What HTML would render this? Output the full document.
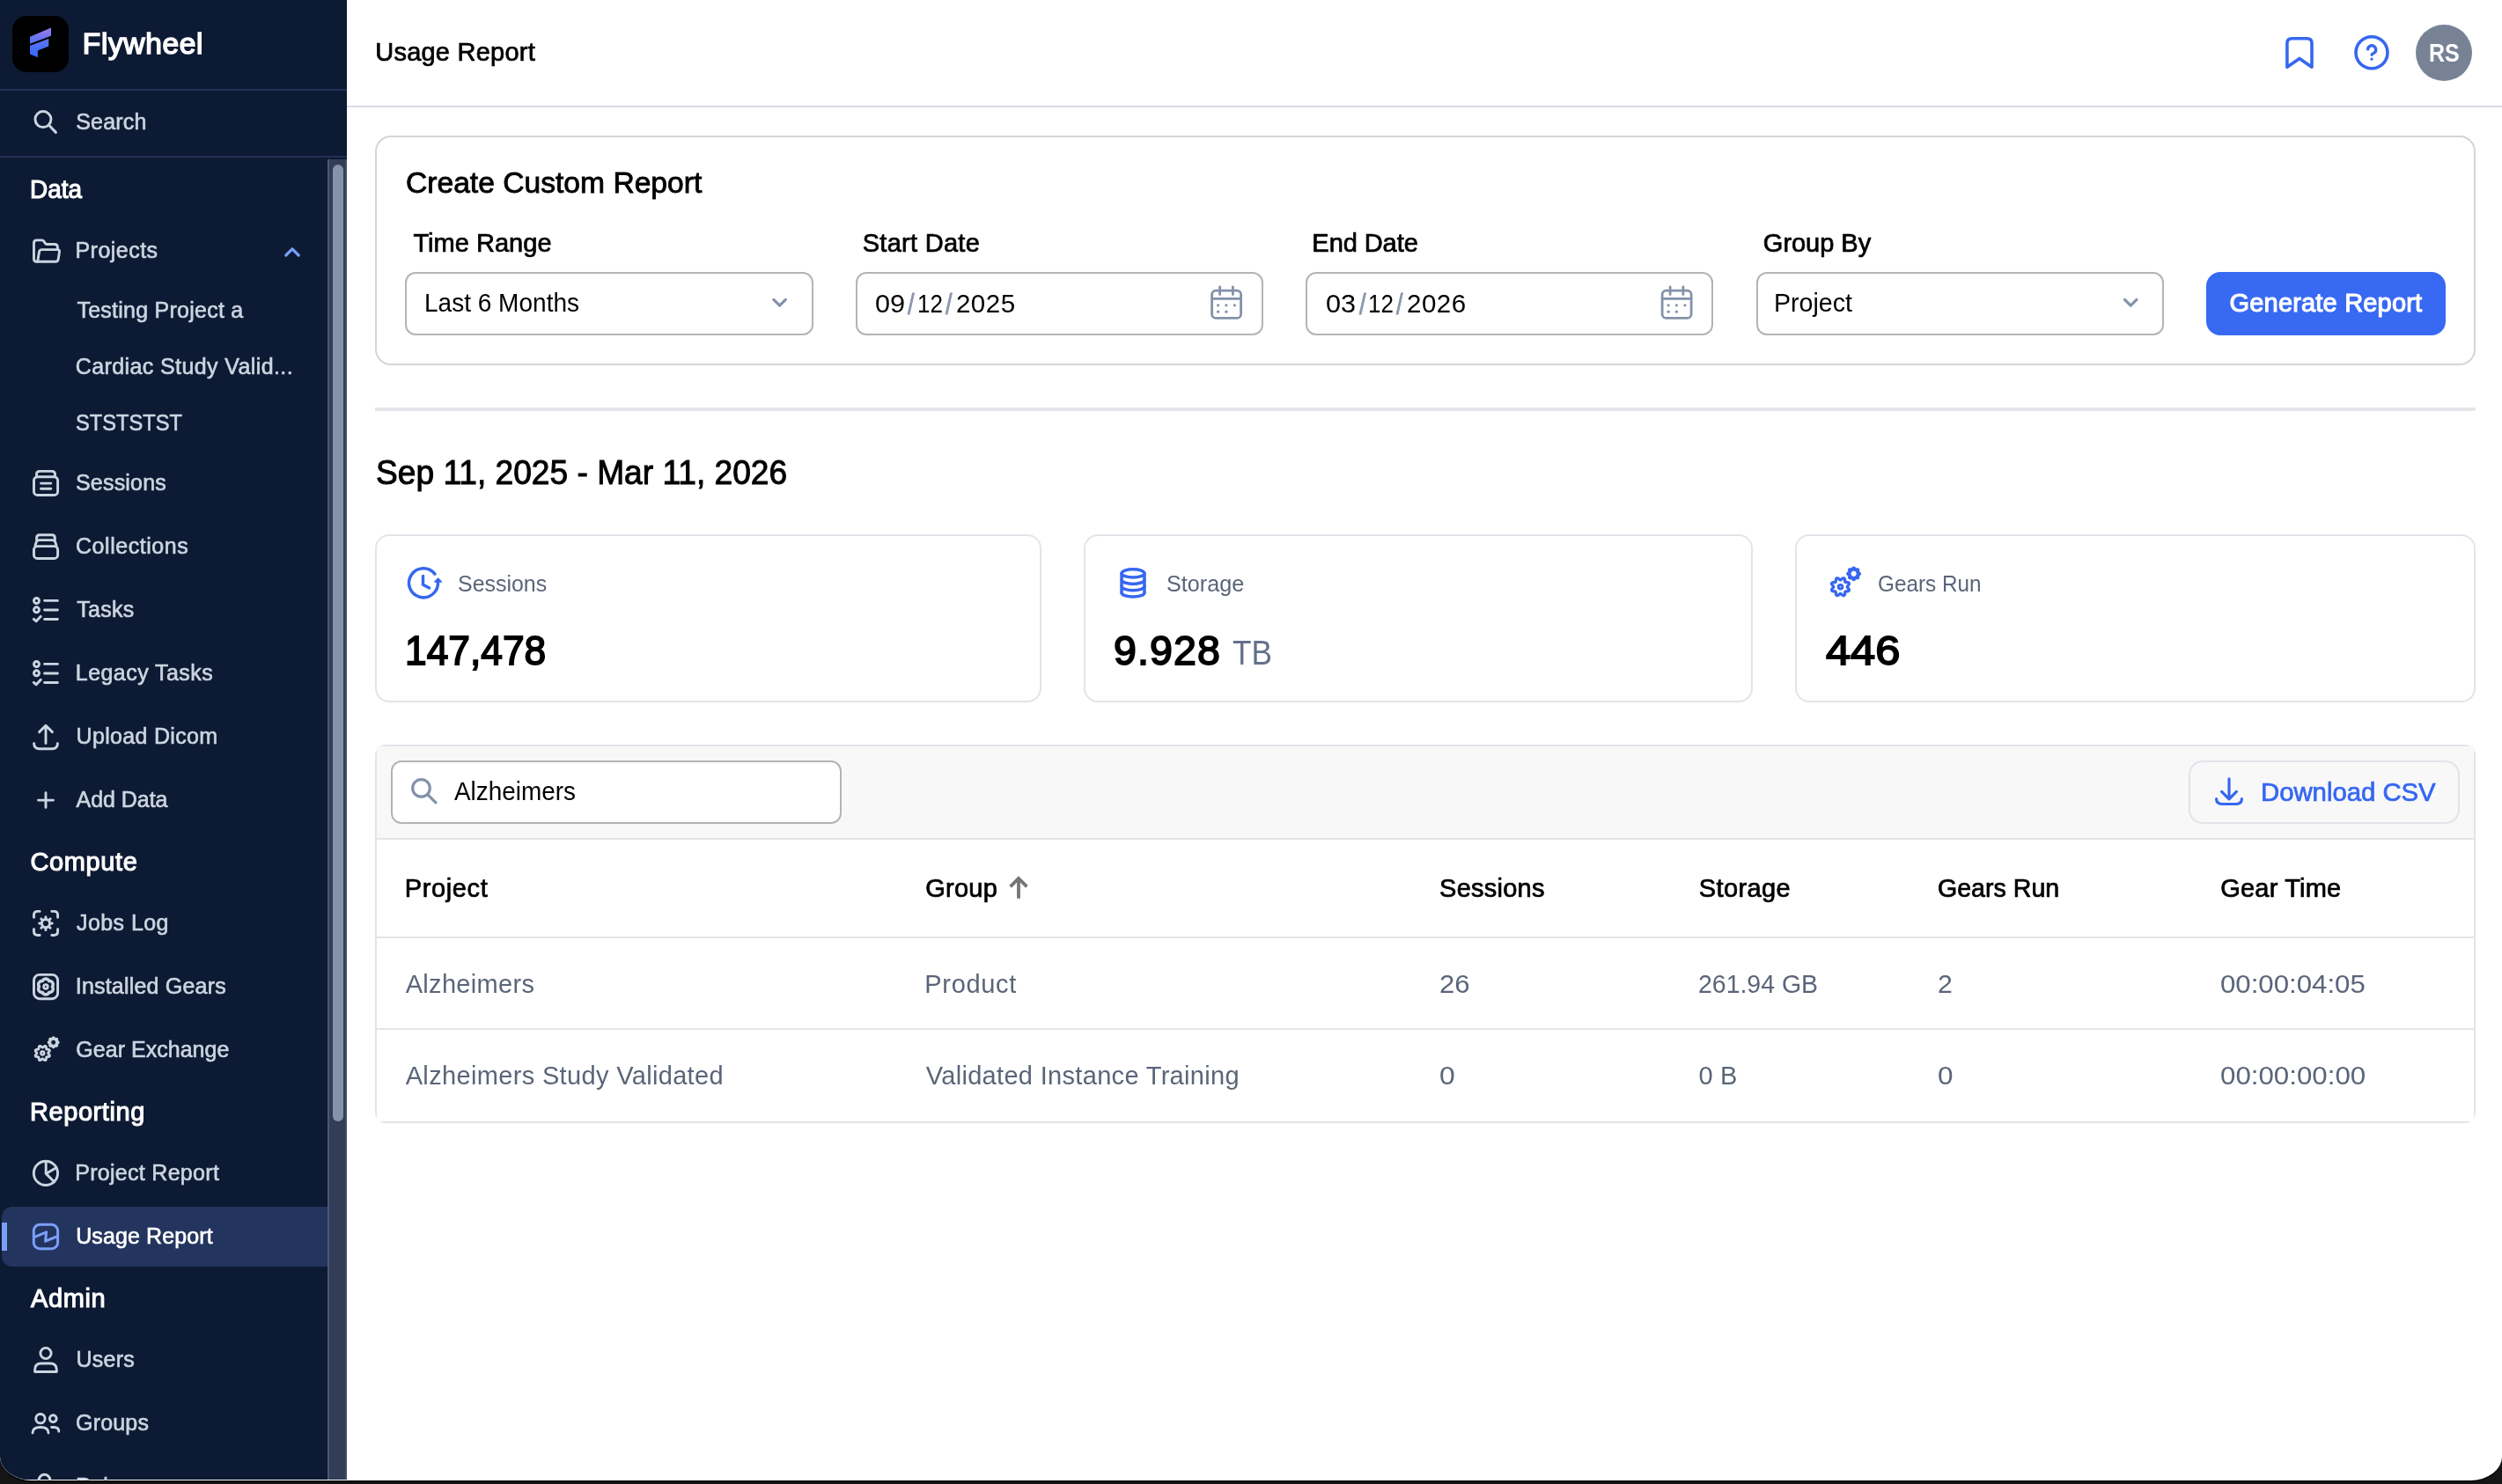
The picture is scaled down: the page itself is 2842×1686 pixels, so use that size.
<!DOCTYPE html>
<html><head><meta charset="utf-8"><title>Usage Report</title>
<style>
html,body{margin:0;padding:0}
body{width:2842px;height:1686px;overflow:hidden;background:#151515;font-family:"Liberation Sans",sans-serif;position:relative}
.win{position:absolute;left:0;top:0;width:2842px;height:1682px;background:#fff;border-radius:0 0 36px 36px / 0 0 27px 27px;overflow:hidden}
.winsh{left:0;top:0;width:2842px;height:1682px;border-radius:0 0 36px 36px / 0 0 27px 27px;box-shadow:0 1.4px 0 #000}
.winedge{left:0;top:1600px;width:394px;height:82px;border-radius:0 0 0 36px / 0 0 0 27px;box-shadow:inset 0 -1px 0 rgba(255,255,255,.22);pointer-events:none}
.a{position:absolute;box-sizing:border-box}
.t{position:absolute;white-space:pre;line-height:1;font-family:"Liberation Sans",sans-serif;-webkit-font-smoothing:antialiased}
.side{left:0;top:0;width:394px;height:1681px;background:#0d1a33}
.sline{left:0;width:394px;height:2px;background:#223056}
.track{left:372px;top:181px;width:22px;height:1500px;background:#323d58;border-left:2px solid #4e586f;border-right:2px solid #434e67}
.thumb{left:378px;top:187px;width:12px;height:1087px;border-radius:6px;background:#8593aa}
.sel{left:2px;top:1371px;width:372px;height:68px;background:#23355e;border-radius:12px 0 0 12px}
.ind{left:2px;top:1389px;width:6px;height:32px;background:#7b9ef8}
.hline{left:394px;top:120px;width:2448px;height:2px;background:#d6dbe4}
.card{border:2px solid #d5d5d6;border-radius:18px;background:#fff}
.inp{border:2px solid #b4b4b5;border-radius:12px;background:#fff;height:72px;top:309px;width:463px}
.btn{left:2506px;top:309px;width:272px;height:72px;border-radius:16px;background:#3869f2}
.hr{left:426px;top:463px;width:2386px;height:4px;background:#e4e6ea}
.stat{border:2px solid #e3e4ea;border-radius:16px;background:#fff;top:607px;height:191px}
.tbl{left:426px;top:846px;width:2386px;height:430px;border:2px solid #e3e4ea;border-radius:12px;background:transparent}
.tbar{left:0;top:0;width:100%;height:104px;background:#f8f8f9}
.tbody{left:0;top:106px;width:100%;height:320px;background:#fff}
.tl{left:0;width:100%;height:2px;background:#e4e4ea}
svg{position:absolute;overflow:visible}
.ic{fill:none;stroke:#cbd5e1;stroke-width:2.6;stroke-linecap:round;stroke-linejoin:round}

</style></head>
<body>
<div class="a winsh"></div>
<div class="win">
<div class="a side"></div>
<div class="a sline" style="top:101px"></div>
<div class="a sline" style="top:177px"></div>
<div class="a sel"></div>
<div class="a ind"></div>
<div class="a track"></div>
<div class="a thumb"></div>
<!-- logo -->
<div class="a" style="left:14px;top:18px;width:64px;height:64px;border-radius:16px;background:#000"></div>
<svg style="left:14px;top:18px" width="64" height="64" viewBox="0 0 64 64">
<defs><linearGradient id="lg" x1="0" y1="0" x2="0" y2="1"><stop offset="0" stop-color="#a07be6"/><stop offset="0.45" stop-color="#5b74f5"/><stop offset="1" stop-color="#2f66ff"/></linearGradient></defs>
<path d="M20 23.7 L44 13.5 L44 22.8 L20 31.8 Z M20 34.1 L41.3 26 L41.3 34.6 L28.9 39.4 L28.9 47.2 L20 43.5 Z" fill="url(#lg)"/>
</svg>
<!-- header line -->
<div class="a hline"></div>
<!-- custom report card -->
<div class="a card" style="left:426px;top:154px;width:2386px;height:261px"></div>
<div class="a inp" style="left:460px;width:464px"></div>
<div class="a inp" style="left:972px"></div>
<div class="a inp" style="left:1483px"></div>
<div class="a inp" style="left:1995px"></div>
<div class="a btn"></div>
<div class="a hr"></div>
<!-- stat cards -->
<div class="a stat" style="left:426px;width:757px"></div>
<div class="a stat" style="left:1231px;width:760px"></div>
<div class="a stat" style="left:2039px;width:773px"></div>
<!-- table -->
<div class="a tbl">
 <div class="a tbar"></div>
 <div class="a tbody"></div>
 <div class="a tl" style="top:104px"></div>
 <div class="a tl" style="top:216px"></div>
 <div class="a tl" style="top:320px"></div>
</div>
<div class="a" style="left:444px;top:864px;width:512px;height:72px;border:2px solid #b4b4b5;border-radius:12px;background:#fff"></div>
<div class="a" style="left:2486px;top:864px;width:308px;height:72px;border:2px solid #e2e3e9;border-radius:16px"></div>
<!-- avatar -->
<div class="a" style="left:2744px;top:28px;width:64px;height:64px;border-radius:32px;background:#778395"></div>
<svg class="a" style="left:0;top:0" width="2842" height="1681" viewBox="0 0 2842 1681">
<circle cx="48.95" cy="135.6" r="9.0" fill="none" stroke="#cbd5e1" stroke-width="3.0"/>
<path d="M55.6 142.3 L63.4 150.4" fill="none" stroke="#cbd5e1" stroke-width="3.0" stroke-linecap="round" stroke-linejoin="round" />
<path d="M42.7 297.3 H41.5 Q38.5 297.3 38.5 294.3 V276 Q38.5 272.9 41.6 272.9 H47.6 Q49.2 272.9 50 274.2 L51.2 276.3 Q51.9 277.5 53.4 277.5 H62 Q65.4 277.5 65.4 281 V283.6" fill="none" stroke="#cbd5e1" stroke-width="2.9" stroke-linecap="round" stroke-linejoin="round" />
<path d="M42.7 297.3 L44.5 286.2 Q45 283.6 47.6 283.6 H65.2 Q67.9 283.6 67.5 286.2 L66.2 294.5 Q65.7 297.3 63 297.3 Z" fill="none" stroke="#cbd5e1" stroke-width="2.9" stroke-linecap="round" stroke-linejoin="round" />
<path d="M324.8 290 L332 282.8 L339.2 290" fill="none" stroke="#7b9ef8" stroke-width="3.2" stroke-linecap="round" stroke-linejoin="round" />
<rect x="38.5" y="541.8" width="27.1" height="20.7" rx="4" fill="none" stroke="#cbd5e1" stroke-width="2.9"/>
<path d="M41.5 541.8 V539 Q41.5 535.4 45.1 535.4 H58.9 Q62.5 535.4 62.5 539 V541.8" fill="none" stroke="#cbd5e1" stroke-width="2.9" stroke-linecap="round" stroke-linejoin="round" />
<path d="M46.5 549.1 H57.8 M46.5 555.2 H57.8" fill="none" stroke="#cbd5e1" stroke-width="2.9" stroke-linecap="round" stroke-linejoin="round" />
<rect x="38.5" y="620.6" width="27.1" height="13.9" rx="4" fill="none" stroke="#cbd5e1" stroke-width="2.9"/>
<path d="M40 620 L41 616.4 Q41.8 613.6 44.6 613.6 H59.4 Q62.2 613.6 63 616.4 L64 620" fill="none" stroke="#cbd5e1" stroke-width="2.9" stroke-linecap="round" stroke-linejoin="round" />
<path d="M41.6 613.4 V611.2 Q41.6 607.7 45.1 607.7 H58.9 Q62.4 607.7 62.4 611.2 V613.4" fill="none" stroke="#cbd5e1" stroke-width="2.9" stroke-linecap="round" stroke-linejoin="round" />
<circle cx="41.5" cy="682.5" r="3.0" fill="none" stroke="#cbd5e1" stroke-width="2.9"/>
<circle cx="41.5" cy="692.8" r="3.0" fill="none" stroke="#cbd5e1" stroke-width="2.9"/>
<path d="M38.3 703.4 L41.2 705.8 L46.3 700.3" fill="none" stroke="#cbd5e1" stroke-width="2.9" stroke-linecap="round" stroke-linejoin="round" />
<path d="M50.6 682.4 H65.4 M50.6 693 H65.4 M50.6 703.5 H65.4" fill="none" stroke="#cbd5e1" stroke-width="2.9" stroke-linecap="round" stroke-linejoin="round" />
<circle cx="41.5" cy="754.5" r="3.0" fill="none" stroke="#cbd5e1" stroke-width="2.9"/>
<circle cx="41.5" cy="764.8" r="3.0" fill="none" stroke="#cbd5e1" stroke-width="2.9"/>
<path d="M38.3 775.4 L41.2 777.8 L46.3 772.3" fill="none" stroke="#cbd5e1" stroke-width="2.9" stroke-linecap="round" stroke-linejoin="round" />
<path d="M50.6 754.4 H65.4 M50.6 765 H65.4 M50.6 775.5 H65.4" fill="none" stroke="#cbd5e1" stroke-width="2.9" stroke-linecap="round" stroke-linejoin="round" />
<path d="M52 844.5 V824.4 M44.6 831.6 L52 824.2 L59.4 831.6" fill="none" stroke="#cbd5e1" stroke-width="2.9" stroke-linecap="round" stroke-linejoin="round" />
<path d="M38.6 844.6 Q38.6 850.8 45 850.8 H59 Q65.4 850.8 65.4 844.6" fill="none" stroke="#cbd5e1" stroke-width="2.9" stroke-linecap="round" stroke-linejoin="round" />
<path d="M43.5 909.1 H60.5 M52 900.7 V917.4" fill="none" stroke="#cbd5e1" stroke-width="2.9" stroke-linecap="round" stroke-linejoin="round" />
<path d="M38.5 1042.3 V1039.6 Q38.5 1035.4 42.7 1035.4 H45.2 M58.8 1035.4 H61.4 Q65.6 1035.4 65.6 1039.6 V1042.3 M65.6 1055.6 V1058.3 Q65.6 1062.5 61.4 1062.5 H58.8 M45.2 1062.5 H42.7 Q38.5 1062.5 38.5 1058.3 V1055.6" fill="none" stroke="#cbd5e1" stroke-width="2.9" stroke-linecap="round" stroke-linejoin="round" />
<circle cx="51.95" cy="1049.1" r="4.6" fill="none" stroke="#cbd5e1" stroke-width="3.0"/>
<path d="M58.15 1049.10 L59.25 1049.10 M56.33 1053.48 L57.11 1054.26 M51.95 1055.30 L51.95 1056.40 M47.57 1053.48 L46.79 1054.26 M45.75 1049.10 L44.65 1049.10 M47.57 1044.72 L46.79 1043.94 M51.95 1042.90 L51.95 1041.80 M56.33 1044.72 L57.11 1043.94" fill="none" stroke="#cbd5e1" stroke-width="3.0" stroke-linecap="round" stroke-linejoin="round" />
<rect x="38.5" y="1107.4" width="27.1" height="27.3" rx="6.5" fill="none" stroke="#cbd5e1" stroke-width="2.9"/>
<path d="M48.22 1114.53 L48.68 1113.71 L49.33 1113.01 L50.12 1112.49 L51.01 1112.16 L51.95 1112.05 L52.89 1112.16 L53.78 1112.49 L54.57 1113.01 L55.22 1113.71 L55.68 1114.53 L55.68 1114.53 L56.63 1114.52 L57.56 1114.74 L58.41 1115.16 L59.13 1115.76 L59.70 1116.52 L60.08 1117.40 L60.24 1118.33 L60.18 1119.28 L59.90 1120.18 L59.42 1121.00 L59.42 1121.00 L59.90 1121.82 L60.18 1122.72 L60.24 1123.67 L60.08 1124.60 L59.70 1125.48 L59.13 1126.24 L58.41 1126.84 L57.56 1127.26 L56.63 1127.48 L55.68 1127.47 L55.68 1127.47 L55.22 1128.29 L54.57 1128.99 L53.78 1129.51 L52.89 1129.84 L51.95 1129.95 L51.01 1129.84 L50.12 1129.51 L49.33 1128.99 L48.68 1128.29 L48.22 1127.47 L48.22 1127.47 L47.27 1127.48 L46.34 1127.26 L45.49 1126.84 L44.77 1126.24 L44.20 1125.48 L43.82 1124.60 L43.66 1123.67 L43.72 1122.72 L44.00 1121.82 L44.48 1121.00 L44.48 1121.00 L44.00 1120.18 L43.72 1119.28 L43.66 1118.33 L43.82 1117.40 L44.20 1116.52 L44.77 1115.76 L45.49 1115.16 L46.34 1114.74 L47.27 1114.52 L48.22 1114.53 Z" fill="none" stroke="#cbd5e1" stroke-width="3.5" stroke-linecap="round" stroke-linejoin="round" />
<circle cx="51.95" cy="1121" r="2.35" fill="none" stroke="#cbd5e1" stroke-width="2.7"/>
<path d="M54.65 1196.50 L54.80 1196.93 L55.19 1197.41 L55.70 1197.97 L56.16 1198.61 L56.42 1199.26 L56.37 1199.84 L55.99 1200.29 L55.35 1200.57 L54.57 1200.69 L53.81 1200.73 L53.20 1200.80 L52.79 1200.99 L52.60 1201.40 L52.53 1202.01 L52.49 1202.77 L52.37 1203.55 L52.09 1204.19 L51.64 1204.57 L51.06 1204.62 L50.41 1204.36 L49.77 1203.90 L49.21 1203.39 L48.73 1203.00 L48.30 1202.86 L47.87 1203.00 L47.39 1203.39 L46.83 1203.90 L46.19 1204.36 L45.54 1204.62 L44.96 1204.57 L44.51 1204.19 L44.23 1203.55 L44.11 1202.77 L44.07 1202.01 L44.00 1201.40 L43.81 1200.99 L43.40 1200.80 L42.79 1200.73 L42.03 1200.69 L41.25 1200.57 L40.61 1200.29 L40.23 1199.84 L40.18 1199.26 L40.44 1198.61 L40.90 1197.97 L41.41 1197.41 L41.80 1196.93 L41.95 1196.50 L41.80 1196.07 L41.41 1195.59 L40.90 1195.03 L40.44 1194.39 L40.18 1193.74 L40.23 1193.16 L40.61 1192.71 L41.25 1192.43 L42.03 1192.31 L42.79 1192.27 L43.40 1192.20 L43.81 1192.01 L44.00 1191.60 L44.07 1190.99 L44.11 1190.23 L44.23 1189.45 L44.51 1188.81 L44.96 1188.43 L45.54 1188.38 L46.19 1188.64 L46.83 1189.10 L47.39 1189.61 L47.87 1190.00 L48.30 1190.14 L48.73 1190.00 L49.21 1189.61 L49.77 1189.10 L50.41 1188.64 L51.06 1188.38 L51.64 1188.43 L52.09 1188.81 L52.37 1189.45 L52.49 1190.23 L52.53 1190.99 L52.60 1191.60 L52.79 1192.01 L53.20 1192.20 L53.81 1192.27 L54.57 1192.31 L55.35 1192.43 L55.99 1192.71 L56.37 1193.16 L56.42 1193.74 L56.16 1194.39 L55.70 1195.03 L55.19 1195.59 L54.80 1196.07 Z" fill="none" stroke="#cbd5e1" stroke-width="2.8" stroke-linecap="round" stroke-linejoin="round" />
<circle cx="48.3" cy="1196.5" r="1.8859999999999997" fill="none" stroke="#cbd5e1" stroke-width="2.52"/>
<path d="M66.18 1184.28 L66.04 1184.63 L65.68 1184.94 L65.19 1185.18 L64.68 1185.35 L64.29 1185.51 L64.09 1185.69 L64.10 1185.97 L64.27 1186.35 L64.50 1186.83 L64.68 1187.35 L64.72 1187.82 L64.57 1188.17 L64.22 1188.32 L63.75 1188.28 L63.23 1188.10 L62.75 1187.87 L62.37 1187.70 L62.09 1187.69 L61.91 1187.89 L61.75 1188.28 L61.58 1188.79 L61.34 1189.28 L61.03 1189.64 L60.68 1189.78 L60.33 1189.64 L60.02 1189.28 L59.79 1188.79 L59.61 1188.28 L59.46 1187.89 L59.27 1187.69 L59.00 1187.70 L58.61 1187.87 L58.13 1188.10 L57.61 1188.28 L57.14 1188.32 L56.80 1188.17 L56.64 1187.82 L56.68 1187.35 L56.86 1186.83 L57.10 1186.35 L57.26 1185.97 L57.27 1185.69 L57.07 1185.51 L56.68 1185.35 L56.18 1185.18 L55.68 1184.94 L55.32 1184.63 L55.19 1184.28 L55.32 1183.93 L55.68 1183.62 L56.18 1183.39 L56.68 1183.21 L57.07 1183.06 L57.27 1182.87 L57.26 1182.60 L57.10 1182.21 L56.86 1181.73 L56.68 1181.21 L56.64 1180.74 L56.80 1180.40 L57.14 1180.24 L57.61 1180.28 L58.13 1180.46 L58.61 1180.70 L59.00 1180.86 L59.27 1180.87 L59.46 1180.67 L59.61 1180.28 L59.79 1179.78 L60.02 1179.28 L60.33 1178.92 L60.68 1178.79 L61.03 1178.92 L61.34 1179.28 L61.58 1179.78 L61.75 1180.28 L61.91 1180.67 L62.09 1180.87 L62.37 1180.86 L62.75 1180.70 L63.23 1180.46 L63.75 1180.28 L64.22 1180.24 L64.57 1180.40 L64.72 1180.74 L64.68 1181.21 L64.50 1181.73 L64.27 1182.21 L64.10 1182.60 L64.09 1182.87 L64.29 1183.06 L64.68 1183.21 L65.19 1183.39 L65.68 1183.62 L66.04 1183.93 Z" fill="none" stroke="#cbd5e1" stroke-width="2.9" stroke-linecap="round" stroke-linejoin="round" />
<circle cx="51.95" cy="1332.9" r="13.6" fill="none" stroke="#cbd5e1" stroke-width="2.9"/>
<path d="M52.2 1319.5 V1333.4 L63.8 1326.8 M52.2 1333.4 L61.7 1342.8" fill="none" stroke="#cbd5e1" stroke-width="2.9" stroke-linecap="round" stroke-linejoin="round" />
<rect x="38.3" y="1391.3" width="27.3" height="27.4" rx="7" fill="none" stroke="#7b9ef8" stroke-width="3"/>
<path d="M38.6 1405.6 L52.6 1399.8 L51.6 1410.2 L65.4 1404.5" fill="none" stroke="#7b9ef8" stroke-width="3.0" stroke-linecap="round" stroke-linejoin="round" />
<circle cx="52" cy="1537.5" r="6.1" fill="none" stroke="#cbd5e1" stroke-width="2.9"/>
<path d="M39.6 1558.5 V1556.2 Q39.6 1549 47 1549 H57 Q64.3 1549 64.3 1556.2 V1558.5 Z" fill="none" stroke="#cbd5e1" stroke-width="2.9" stroke-linecap="round" stroke-linejoin="round" />
<circle cx="45.9" cy="1611.7" r="5.2" fill="none" stroke="#cbd5e1" stroke-width="2.9"/>
<circle cx="60.3" cy="1611.7" r="3.9" fill="none" stroke="#cbd5e1" stroke-width="2.9"/>
<path d="M37 1628 Q37 1621.5 46 1621.5 Q55 1621.5 55 1628" fill="none" stroke="#cbd5e1" stroke-width="2.9" stroke-linecap="round" stroke-linejoin="round" />
<path d="M58.6 1621.5 H61 Q66.8 1621.5 66.8 1626.2" fill="none" stroke="#cbd5e1" stroke-width="2.9" stroke-linecap="round" stroke-linejoin="round" />
<circle cx="50.5" cy="1681.6" r="6.3" fill="none" stroke="#cbd5e1" stroke-width="2.9"/>
<path d="M2597.9 76.2 V49.2 Q2597.9 43.7 2603.4 43.7 H2620.5 Q2626 43.7 2626 49.2 V76.2 L2611.95 66.4 Z" fill="none" stroke="#3667f0" stroke-width="3.6" stroke-linecap="round" stroke-linejoin="round" />
<circle cx="2694" cy="59.75" r="18.0" fill="none" stroke="#3667f0" stroke-width="3.6"/>
<path d="M2689.6 55.9 A4.6 4.6 0 1 1 2697.3 59.7 C2695.6 60.9 2694.1 61.3 2694.1 62.3" fill="none" stroke="#3667f0" stroke-width="3.4" stroke-linecap="round" stroke-linejoin="round" />
<circle cx="2694" cy="67.2" r="1.6" fill="#3667f0"/>
<path d="M878.8000000000001 340.4 L885.6 347.2 L892.4 340.4" fill="none" stroke="#8492a9" stroke-width="3.2" stroke-linecap="round" stroke-linejoin="round" />
<path d="M2413.3999999999996 340.4 L2420.2 347.2 L2427.0 340.4" fill="none" stroke="#8492a9" stroke-width="3.2" stroke-linecap="round" stroke-linejoin="round" />
<rect x="1376.6" y="330.2" width="33" height="31.2" rx="4.5" fill="none" stroke="#8492a9" stroke-width="2.8"/>
<path d="M1376.6 339.3 H1409.6 M1385.6 325.9 V334.6 M1400.3999999999999 325.9 V334.6" fill="none" stroke="#8492a9" stroke-width="2.8" stroke-linecap="round" stroke-linejoin="round" />
<circle cx="1383.6" cy="346.8" r="1.6" fill="#8492a9"/>
<circle cx="1392.8999999999999" cy="346.8" r="1.6" fill="#8492a9"/>
<circle cx="1402.3999999999999" cy="346.8" r="1.6" fill="#8492a9"/>
<circle cx="1383.6" cy="354.2" r="1.6" fill="#8492a9"/>
<circle cx="1392.8999999999999" cy="354.2" r="1.6" fill="#8492a9"/>
<rect x="1888.1" y="330.2" width="33" height="31.2" rx="4.5" fill="none" stroke="#8492a9" stroke-width="2.8"/>
<path d="M1888.1 339.3 H1921.1 M1897.1 325.9 V334.6 M1911.8999999999999 325.9 V334.6" fill="none" stroke="#8492a9" stroke-width="2.8" stroke-linecap="round" stroke-linejoin="round" />
<circle cx="1895.1" cy="346.8" r="1.6" fill="#8492a9"/>
<circle cx="1904.3999999999999" cy="346.8" r="1.6" fill="#8492a9"/>
<circle cx="1913.8999999999999" cy="346.8" r="1.6" fill="#8492a9"/>
<circle cx="1895.1" cy="354.2" r="1.6" fill="#8492a9"/>
<circle cx="1904.3999999999999" cy="354.2" r="1.6" fill="#8492a9"/>
<path d="M494.00 652.14 A16.5 16.5 0 1 0 497.46 661.15" fill="none" stroke="#3667f0" stroke-width="3.5" stroke-linecap="round" stroke-linejoin="round" />
<path d="M497.6 657.2 L501.3 661 H493.9 Z" fill="#3667f0" stroke="#3667f0" stroke-width="1.6" stroke-linejoin="round"/>
<path d="M480.5 654.4 V664.3 L487.6 668" fill="none" stroke="#3667f0" stroke-width="3.4" stroke-linecap="round" stroke-linejoin="round" />
<ellipse cx="1287" cy="651.4" rx="12.95" ry="4.7" fill="none" stroke="#3667f0" stroke-width="3.5"/>
<path d="M1274.05 651.4 V673.4 M1299.95 651.4 V673.4" fill="none" stroke="#3667f0" stroke-width="3.5" stroke-linecap="round" stroke-linejoin="round" />
<path d="M1274.05 658.7 A12.95 4.7 0 0 0 1299.95 658.7" fill="none" stroke="#3667f0" stroke-width="3.5" stroke-linecap="round" stroke-linejoin="round" />
<path d="M1274.05 666.0 A12.95 4.7 0 0 0 1299.95 666.0" fill="none" stroke="#3667f0" stroke-width="3.5" stroke-linecap="round" stroke-linejoin="round" />
<path d="M1274.05 673.4 A12.95 4.7 0 0 0 1299.95 673.4" fill="none" stroke="#3667f0" stroke-width="3.5" stroke-linecap="round" stroke-linejoin="round" />
<path d="M2098.25 666.70 L2098.43 667.22 L2098.90 667.81 L2099.52 668.49 L2100.09 669.27 L2100.40 670.06 L2100.34 670.78 L2099.88 671.32 L2099.10 671.66 L2098.15 671.81 L2097.22 671.86 L2096.47 671.94 L2095.98 672.18 L2095.74 672.67 L2095.66 673.42 L2095.61 674.35 L2095.46 675.30 L2095.12 676.08 L2094.58 676.54 L2093.86 676.60 L2093.07 676.29 L2092.29 675.72 L2091.61 675.10 L2091.02 674.63 L2090.50 674.45 L2089.98 674.63 L2089.39 675.10 L2088.71 675.72 L2087.93 676.29 L2087.14 676.60 L2086.42 676.54 L2085.88 676.08 L2085.54 675.30 L2085.39 674.35 L2085.34 673.42 L2085.26 672.67 L2085.02 672.18 L2084.53 671.94 L2083.78 671.86 L2082.85 671.81 L2081.90 671.66 L2081.12 671.32 L2080.66 670.78 L2080.60 670.06 L2080.91 669.27 L2081.48 668.49 L2082.10 667.81 L2082.57 667.22 L2082.75 666.70 L2082.57 666.18 L2082.10 665.59 L2081.48 664.91 L2080.91 664.13 L2080.60 663.34 L2080.66 662.62 L2081.12 662.08 L2081.90 661.74 L2082.85 661.59 L2083.78 661.54 L2084.53 661.46 L2085.02 661.22 L2085.26 660.73 L2085.34 659.98 L2085.39 659.05 L2085.54 658.10 L2085.88 657.32 L2086.42 656.86 L2087.14 656.80 L2087.93 657.11 L2088.71 657.68 L2089.39 658.30 L2089.98 658.77 L2090.50 658.95 L2091.02 658.77 L2091.61 658.30 L2092.29 657.68 L2093.07 657.11 L2093.86 656.80 L2094.58 656.86 L2095.12 657.32 L2095.46 658.10 L2095.61 659.05 L2095.66 659.98 L2095.74 660.73 L2095.98 661.22 L2096.47 661.46 L2097.22 661.54 L2098.15 661.59 L2099.10 661.74 L2099.88 662.08 L2100.34 662.62 L2100.40 663.34 L2100.09 664.13 L2099.52 664.91 L2098.90 665.59 L2098.43 666.18 Z" fill="none" stroke="#3667f0" stroke-width="3.3" stroke-linecap="round" stroke-linejoin="round" />
<circle cx="2090.5" cy="666.7" r="2.3" fill="none" stroke="#3667f0" stroke-width="2.9699999999999998"/>
<path d="M2112.30 651.80 L2112.14 652.23 L2111.70 652.60 L2111.09 652.89 L2110.48 653.11 L2110.00 653.29 L2109.76 653.52 L2109.77 653.86 L2109.97 654.33 L2110.26 654.91 L2110.48 655.54 L2110.53 656.12 L2110.34 656.54 L2109.92 656.73 L2109.34 656.68 L2108.71 656.46 L2108.12 656.17 L2107.66 655.97 L2107.32 655.96 L2107.09 656.20 L2106.91 656.68 L2106.69 657.29 L2106.40 657.90 L2106.03 658.34 L2105.60 658.50 L2105.17 658.34 L2104.80 657.90 L2104.51 657.29 L2104.29 656.68 L2104.11 656.20 L2103.88 655.96 L2103.54 655.97 L2103.07 656.17 L2102.49 656.46 L2101.86 656.68 L2101.28 656.73 L2100.86 656.54 L2100.67 656.12 L2100.72 655.54 L2100.94 654.91 L2101.23 654.33 L2101.43 653.86 L2101.44 653.52 L2101.20 653.29 L2100.72 653.11 L2100.11 652.89 L2099.50 652.60 L2099.06 652.23 L2098.90 651.80 L2099.06 651.37 L2099.50 651.00 L2100.11 650.71 L2100.72 650.49 L2101.20 650.31 L2101.44 650.08 L2101.43 649.74 L2101.23 649.28 L2100.94 648.69 L2100.72 648.06 L2100.67 647.48 L2100.86 647.06 L2101.28 646.87 L2101.86 646.92 L2102.49 647.14 L2103.07 647.43 L2103.54 647.63 L2103.88 647.64 L2104.11 647.40 L2104.29 646.92 L2104.51 646.31 L2104.80 645.70 L2105.17 645.26 L2105.60 645.10 L2106.03 645.26 L2106.40 645.70 L2106.69 646.31 L2106.91 646.92 L2107.09 647.40 L2107.32 647.64 L2107.66 647.63 L2108.12 647.43 L2108.71 647.14 L2109.34 646.92 L2109.92 646.87 L2110.34 647.06 L2110.53 647.48 L2110.48 648.06 L2110.26 648.69 L2109.97 649.28 L2109.77 649.74 L2109.76 650.08 L2110.00 650.31 L2110.48 650.49 L2111.09 650.71 L2111.70 651.00 L2112.14 651.37 Z" fill="none" stroke="#3667f0" stroke-width="3.4" stroke-linecap="round" stroke-linejoin="round" />
<circle cx="478.5" cy="895.4" r="9.8" fill="none" stroke="#8492a9" stroke-width="3.2"/>
<path d="M485.7 902.6 L495 911.9" fill="none" stroke="#8492a9" stroke-width="3.2" stroke-linecap="round" stroke-linejoin="round" />
<path d="M2532 884.8 V907.4 M2523.6 899.4 L2532 907.8 L2540.4 899.4" fill="none" stroke="#3667f0" stroke-width="3.2" stroke-linecap="round" stroke-linejoin="round" />
<path d="M2517.6 907.6 Q2517.6 913.5 2524 913.5 H2540 Q2546.4 913.5 2546.4 907.6" fill="none" stroke="#3667f0" stroke-width="3.2" stroke-linecap="round" stroke-linejoin="round" />
<path d="M1157 998.5 V1020.8 M1147.6 1007.3 L1157 997.9 L1166.4 1007.3" fill="none" stroke="#757575" stroke-width="3.8" stroke-linejoin="miter"/>
</svg>
<div class="a winedge"></div>
<div class="a" style="left:0;top:0;width:2842px;height:1681px;will-change:transform"><div class="t" style="left:93.87px;top:33px;font-size:33.5px;color:#fff;letter-spacing:0.617px;-webkit-text-stroke:1.54px #fff;">Flywheel</div>
<div class="t" style="left:86.21px;top:126px;font-size:25px;color:#cbd5e1;letter-spacing:0.193px;-webkit-text-stroke:0.62px #cbd5e1;">Search</div>
<div class="t" style="left:33.93px;top:201px;font-size:29px;color:#fff;letter-spacing:0.000px;transform:scaleX(0.9629);transform-origin:0 0;-webkit-text-stroke:1.10px #fff;">Data</div>
<div class="t" style="left:85.46px;top:272px;font-size:25px;color:#cbd5e1;letter-spacing:0.474px;-webkit-text-stroke:0.62px #cbd5e1;">Projects</div>
<div class="t" style="left:87.46px;top:340px;font-size:25px;color:#cbd5e1;letter-spacing:0.245px;-webkit-text-stroke:0.62px #cbd5e1;">Testing Project a</div>
<div class="t" style="left:85.71px;top:404px;font-size:25px;color:#cbd5e1;letter-spacing:0.399px;-webkit-text-stroke:0.62px #cbd5e1;">Cardiac Study Valid...</div>
<div class="t" style="left:86.07px;top:468px;font-size:25px;color:#cbd5e1;letter-spacing:0.000px;transform:scaleX(0.9460);transform-origin:0 0;-webkit-text-stroke:0.62px #cbd5e1;">STSTSTST</div>
<div class="t" style="left:86.01px;top:536px;font-size:25px;color:#cbd5e1;letter-spacing:0.191px;-webkit-text-stroke:0.62px #cbd5e1;">Sessions</div>
<div class="t" style="left:86.01px;top:608px;font-size:25px;color:#cbd5e1;letter-spacing:0.540px;-webkit-text-stroke:0.62px #cbd5e1;">Collections</div>
<div class="t" style="left:87.31px;top:680px;font-size:25px;color:#cbd5e1;letter-spacing:0.243px;-webkit-text-stroke:0.62px #cbd5e1;">Tasks</div>
<div class="t" style="left:85.81px;top:752px;font-size:25px;color:#cbd5e1;letter-spacing:0.446px;-webkit-text-stroke:0.62px #cbd5e1;">Legacy Tasks</div>
<div class="t" style="left:86.61px;top:824px;font-size:25px;color:#cbd5e1;letter-spacing:0.308px;-webkit-text-stroke:0.62px #cbd5e1;">Upload Dicom</div>
<div class="t" style="left:86.61px;top:896px;font-size:25px;color:#cbd5e1;letter-spacing:-0.051px;-webkit-text-stroke:0.62px #cbd5e1;">Add Data</div>
<div class="t" style="left:34.55px;top:965px;font-size:29px;color:#fff;letter-spacing:0.609px;-webkit-text-stroke:1.10px #fff;">Compute</div>
<div class="t" style="left:87.01px;top:1036px;font-size:25px;color:#cbd5e1;letter-spacing:0.431px;-webkit-text-stroke:0.62px #cbd5e1;">Jobs Log</div>
<div class="t" style="left:85.81px;top:1108px;font-size:25px;color:#cbd5e1;letter-spacing:0.195px;-webkit-text-stroke:0.62px #cbd5e1;">Installed Gears</div>
<div class="t" style="left:86.31px;top:1180px;font-size:25px;color:#cbd5e1;letter-spacing:0.030px;-webkit-text-stroke:0.62px #cbd5e1;">Gear Exchange</div>
<div class="t" style="left:34.05px;top:1249px;font-size:29px;color:#fff;letter-spacing:0.561px;-webkit-text-stroke:1.10px #fff;">Reporting</div>
<div class="t" style="left:85.21px;top:1320px;font-size:25px;color:#cbd5e1;letter-spacing:0.295px;-webkit-text-stroke:0.62px #cbd5e1;">Project Report</div>
<div class="t" style="left:86.21px;top:1392px;font-size:25px;color:#fff;letter-spacing:0.107px;-webkit-text-stroke:0.62px #fff;">Usage Report</div>
<div class="t" style="left:35.05px;top:1461px;font-size:29px;color:#fff;letter-spacing:0.582px;-webkit-text-stroke:1.10px #fff;">Admin</div>
<div class="t" style="left:86.51px;top:1532px;font-size:25px;color:#cbd5e1;letter-spacing:0.223px;-webkit-text-stroke:0.62px #cbd5e1;">Users</div>
<div class="t" style="left:86.01px;top:1604px;font-size:25px;color:#cbd5e1;letter-spacing:0.199px;-webkit-text-stroke:0.62px #cbd5e1;">Groups</div>
<div class="t" style="left:85.66px;top:1676px;font-size:25px;color:#cbd5e1;letter-spacing:0.000px;transform:scaleX(0.9782);transform-origin:0 0;-webkit-text-stroke:0.62px #cbd5e1;">Roles</div>
<div class="t" style="left:426.26px;top:45px;font-size:29px;color:#000;letter-spacing:0.228px;-webkit-text-stroke:0.73px #000;">Usage Report</div>
<div class="t" style="left:460.94px;top:190px;font-size:34px;color:#000;letter-spacing:0.000px;transform:scaleX(0.9887);transform-origin:0 0;-webkit-text-stroke:0.85px #000;">Create Custom Report</div>
<div class="t" style="left:469.46px;top:262px;font-size:29px;color:#000;letter-spacing:0.025px;-webkit-text-stroke:0.73px #000;">Time Range</div>
<div class="t" style="left:979.76px;top:262px;font-size:29px;color:#000;letter-spacing:0.272px;-webkit-text-stroke:0.73px #000;">Start Date</div>
<div class="t" style="left:1490.36px;top:262px;font-size:29px;color:#000;letter-spacing:-0.073px;-webkit-text-stroke:0.73px #000;">End Date</div>
<div class="t" style="left:2002.86px;top:262px;font-size:29px;color:#000;letter-spacing:-0.032px;-webkit-text-stroke:0.73px #000;">Group By</div>
<div class="t" style="left:481.67px;top:330px;font-size:29px;color:#000;letter-spacing:0.000px;transform:scaleX(0.9663);transform-origin:0 0;">Last 6 Months</div>
<div class="t" style="left:2014.73px;top:330px;font-size:29px;color:#000;letter-spacing:0.000px;transform:scaleX(0.9864);transform-origin:0 0;">Project</div>
<div class="t" style="left:2532.55px;top:330px;font-size:29px;color:#fff;letter-spacing:0.182px;-webkit-text-stroke:1.10px #fff;">Generate Report</div>
<div class="t" style="left:426.84px;top:517px;font-size:39px;color:#000;letter-spacing:0.000px;transform:scaleX(0.9520);transform-origin:0 0;-webkit-text-stroke:0.98px #000;">Sep 11, 2025 - Mar 11, 2026</div>
<div class="t" style="left:520.32px;top:651px;font-size:25.5px;color:#5b6579;letter-spacing:0.000px;transform:scaleX(0.9782);transform-origin:0 0;">Sessions</div>
<div class="t" style="left:459.62px;top:716px;font-size:46.5px;color:#000;letter-spacing:0.000px;transform:scaleX(0.9529);transform-origin:0 0;-webkit-text-stroke:1.77px #000;">147,478</div>
<div class="t" style="left:1325.11px;top:651px;font-size:25.5px;color:#5b6579;letter-spacing:0.000px;transform:scaleX(0.9872);transform-origin:0 0;">Storage</div>
<div class="t" style="left:1264.88px;top:716px;font-size:46.5px;color:#000;letter-spacing:1.183px;-webkit-text-stroke:1.77px #000;">9.928</div>
<div class="t" style="left:1400.10px;top:723px;font-size:38px;color:#64708a;letter-spacing:0.000px;transform:scaleX(0.9256);transform-origin:0 0;">TB</div>
<div class="t" style="left:2132.95px;top:651px;font-size:25.5px;color:#5b6579;letter-spacing:0.000px;transform:scaleX(0.9536);transform-origin:0 0;">Gears Run</div>
<div class="t" style="left:2073.80px;top:716px;font-size:46.5px;color:#000;letter-spacing:0.000px;transform:scaleX(1.0871);transform-origin:0 0;-webkit-text-stroke:1.77px #000;">446</div>
<div class="t" style="left:516.10px;top:885px;font-size:29px;color:#000;letter-spacing:0.000px;transform:scaleX(0.9627);transform-origin:0 0;">Alzheimers</div>
<div class="t" style="left:2568.08px;top:885px;font-size:29.5px;color:#3667f0;letter-spacing:0.000px;transform:scaleX(0.9929);transform-origin:0 0;-webkit-text-stroke:0.74px #3667f0;">Download CSV</div>
<div class="t" style="left:459.66px;top:995px;font-size:29px;color:#000;letter-spacing:0.646px;-webkit-text-stroke:0.73px #000;">Project</div>
<div class="t" style="left:1051.16px;top:995px;font-size:29px;color:#000;letter-spacing:0.276px;-webkit-text-stroke:0.73px #000;">Group</div>
<div class="t" style="left:1635.06px;top:995px;font-size:29px;color:#000;letter-spacing:0.243px;-webkit-text-stroke:0.73px #000;">Sessions</div>
<div class="t" style="left:1929.76px;top:995px;font-size:29px;color:#000;letter-spacing:0.389px;-webkit-text-stroke:0.73px #000;">Storage</div>
<div class="t" style="left:2201.08px;top:995px;font-size:29px;color:#000;letter-spacing:0.000px;transform:scaleX(0.9853);transform-origin:0 0;-webkit-text-stroke:0.73px #000;">Gears Run</div>
<div class="t" style="left:2522.26px;top:995px;font-size:29px;color:#000;letter-spacing:0.201px;-webkit-text-stroke:0.73px #000;">Gear Time</div>
<div class="t" style="left:460.70px;top:1104px;font-size:29px;color:#5b6579;letter-spacing:0.308px;">Alzheimers</div>
<div class="t" style="left:1050.30px;top:1104px;font-size:29px;color:#5b6579;letter-spacing:0.669px;">Product</div>
<div class="t" style="left:1634.63px;top:1104px;font-size:29px;color:#5b6579;letter-spacing:0.000px;transform:scaleX(1.0721);transform-origin:0 0;">26</div>
<div class="t" style="left:1929.42px;top:1104px;font-size:29px;color:#5b6579;letter-spacing:0.000px;transform:scaleX(0.9808);transform-origin:0 0;">261.94 GB</div>
<div class="t" style="left:2200.66px;top:1104px;font-size:29px;color:#5b6579;letter-spacing:0.000px;transform:scaleX(1.0429);transform-origin:0 0;">2</div>
<div class="t" style="left:2521.82px;top:1104px;font-size:29px;color:#5b6579;letter-spacing:0.000px;transform:scaleX(1.0757);transform-origin:0 0;">00:00:04:05</div>
<div class="t" style="left:460.70px;top:1208px;font-size:29px;color:#5b6579;letter-spacing:0.338px;">Alzheimers Study Validated</div>
<div class="t" style="left:1051.70px;top:1208px;font-size:29px;color:#5b6579;letter-spacing:0.316px;">Validated Instance Training</div>
<div class="t" style="left:1634.60px;top:1208px;font-size:29px;color:#5b6579;letter-spacing:0.000px;transform:scaleX(1.1000);transform-origin:0 0;">0</div>
<div class="t" style="left:1929.40px;top:1208px;font-size:29px;color:#5b6579;letter-spacing:0.207px;">0 B</div>
<div class="t" style="left:2200.61px;top:1208px;font-size:29px;color:#5b6579;letter-spacing:0.000px;transform:scaleX(1.0857);transform-origin:0 0;">0</div>
<div class="t" style="left:2521.82px;top:1208px;font-size:29px;color:#5b6579;letter-spacing:0.000px;transform:scaleX(1.0783);transform-origin:0 0;">00:00:00:00</div>
<div class="t" style="left:993.76px;top:330px;font-size:29.5px;color:#000;letter-spacing:0.000px;transform:scaleX(1.0380);transform-origin:0 0;">09</div>
<div class="t" style="left:1031.41px;top:330px;font-size:32.5px;color:#8b97ad;letter-spacing:0.000px;transform:scaleX(0.8388);transform-origin:0 0;-webkit-text-stroke:0.81px #8b97ad;">/</div>
<div class="t" style="left:1041.94px;top:330px;font-size:29.5px;color:#000;letter-spacing:0.000px;transform:scaleX(0.8808);transform-origin:0 0;">12</div>
<div class="t" style="left:1074.11px;top:330px;font-size:32.5px;color:#8b97ad;letter-spacing:0.000px;transform:scaleX(0.8287);transform-origin:0 0;-webkit-text-stroke:0.81px #8b97ad;">/</div>
<div class="t" style="left:1085.90px;top:330px;font-size:29.5px;color:#000;letter-spacing:0.527px;">2025</div>
<div class="t" style="left:1505.86px;top:330px;font-size:29.5px;color:#000;letter-spacing:0.000px;transform:scaleX(1.0380);transform-origin:0 0;">03</div>
<div class="t" style="left:1543.51px;top:330px;font-size:32.5px;color:#8b97ad;letter-spacing:0.000px;transform:scaleX(0.8388);transform-origin:0 0;-webkit-text-stroke:0.81px #8b97ad;">/</div>
<div class="t" style="left:1554.04px;top:330px;font-size:29.5px;color:#000;letter-spacing:0.000px;transform:scaleX(0.8808);transform-origin:0 0;">12</div>
<div class="t" style="left:1586.21px;top:330px;font-size:32.5px;color:#8b97ad;letter-spacing:0.000px;transform:scaleX(0.8287);transform-origin:0 0;-webkit-text-stroke:0.81px #8b97ad;">/</div>
<div class="t" style="left:1598.00px;top:330px;font-size:29.5px;color:#000;letter-spacing:0.527px;">2026</div>
<div class="t" style="left:2759.06px;top:45px;font-size:29.5px;color:#fff;letter-spacing:0.000px;transform:scaleX(0.8447);transform-origin:0 0;font-weight:700;">RS</div></div>
</div>

</body></html>
